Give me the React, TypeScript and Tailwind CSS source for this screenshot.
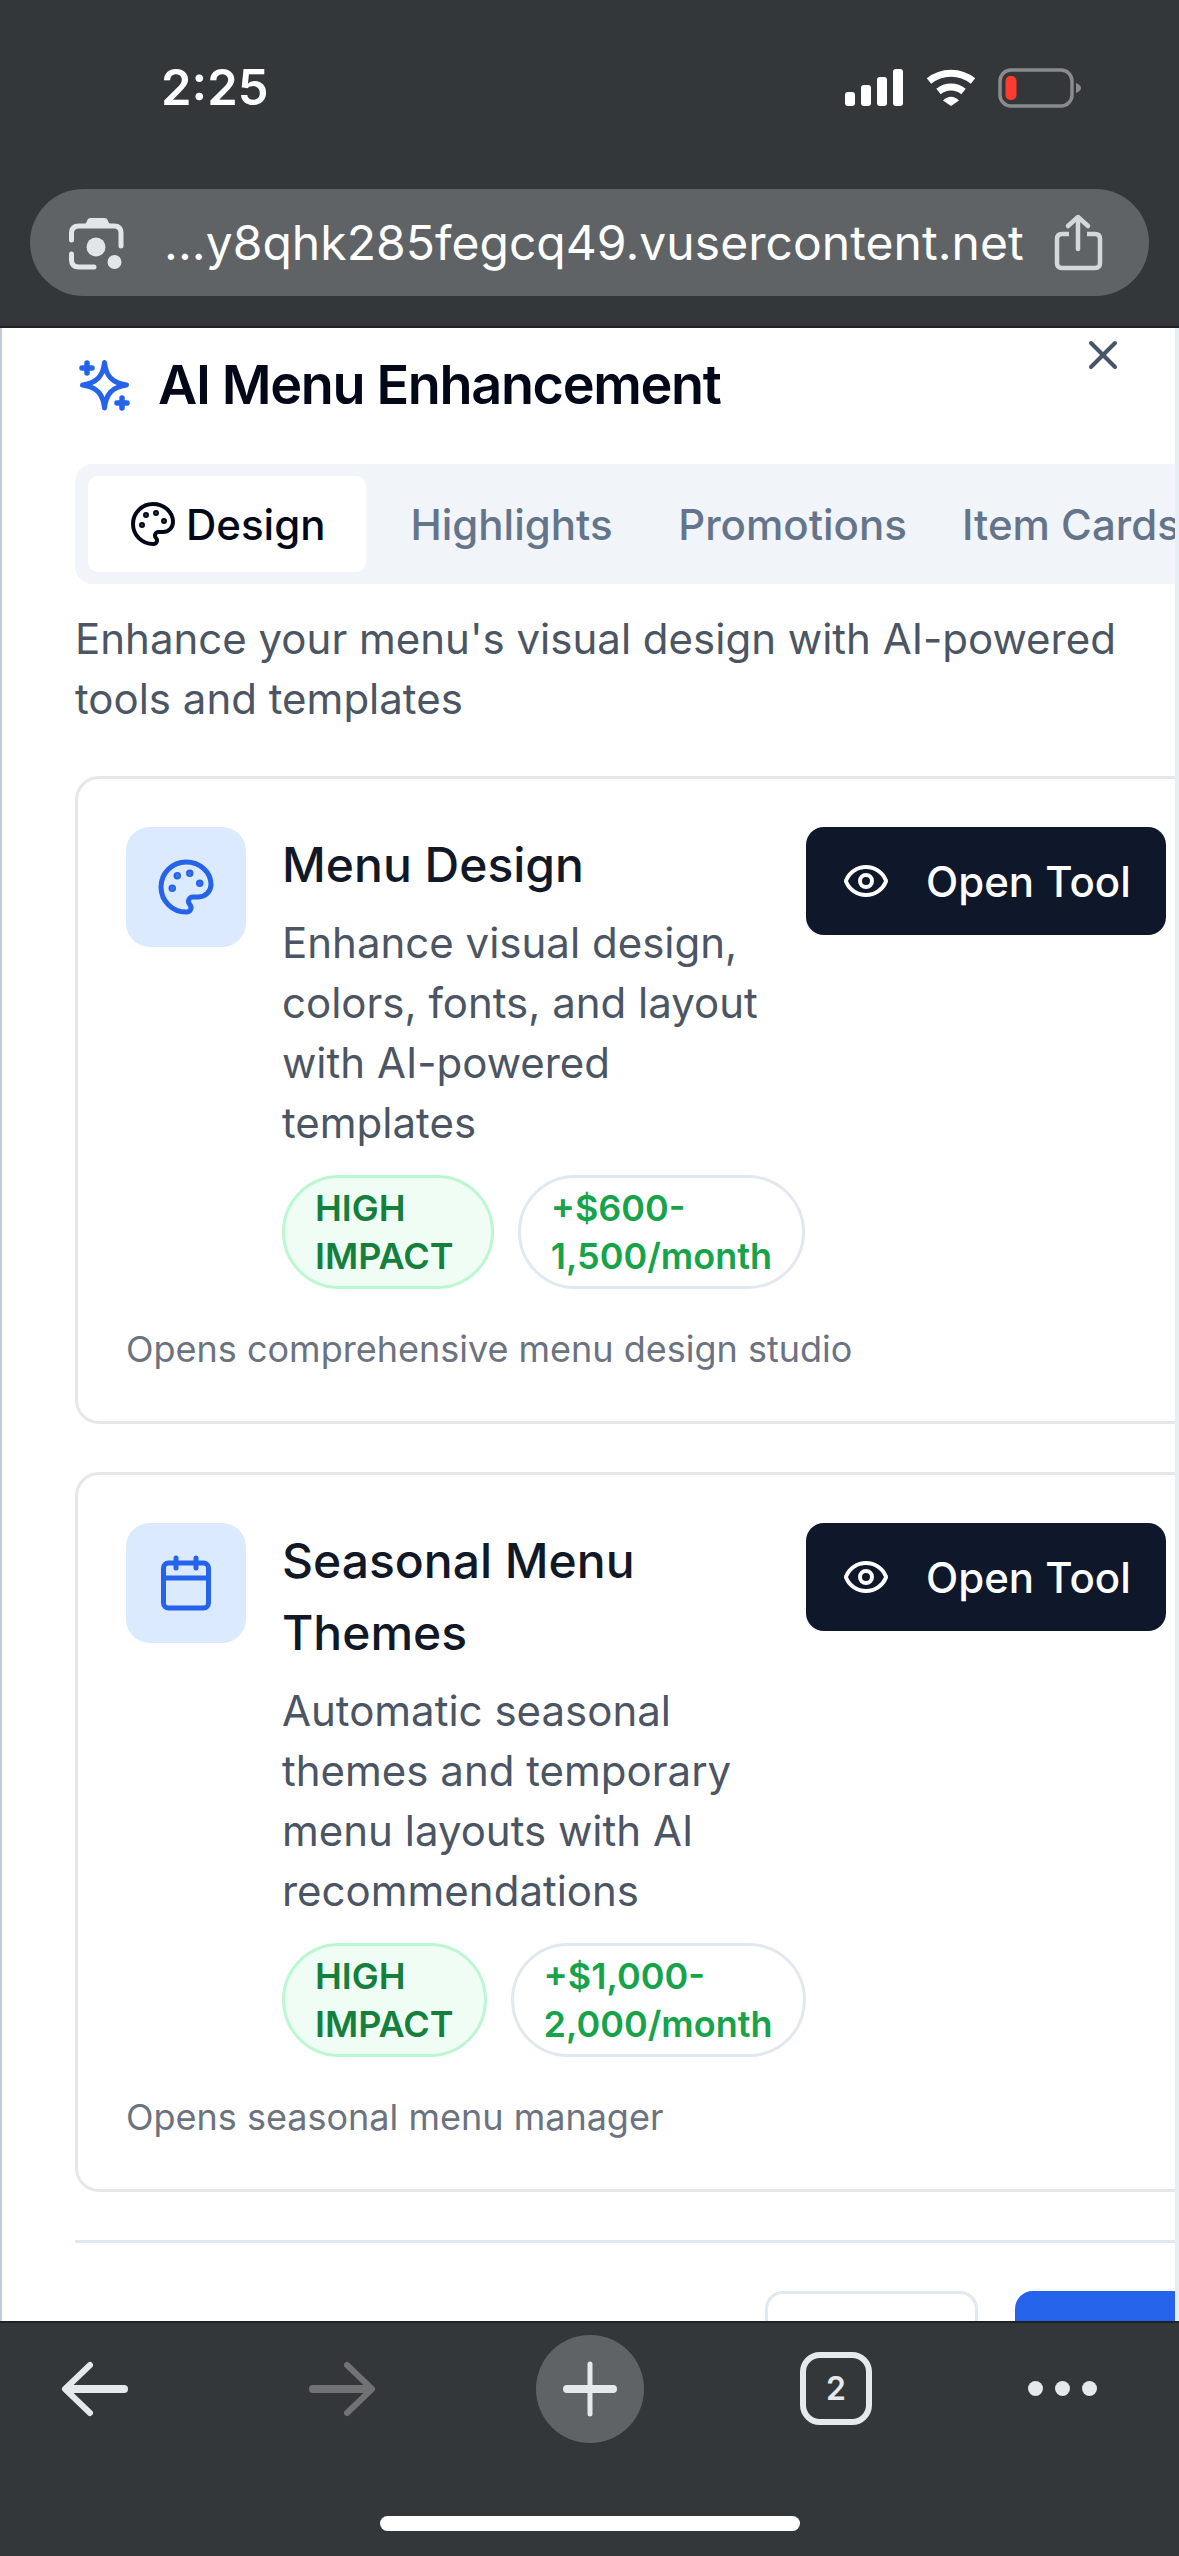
import React from 'react';
import { Calendar, Eye, Palette, X } from 'lucide-react';

type Tool = {
  title: string;
  desc: string;
  value: string;
  note: string;
  icon: React.ReactNode;
};

const tools: Tool[] = [
  {
    title: 'Menu Design',
    desc: 'Enhance visual design, colors, fonts, and layout with AI-powered templates',
    value: '+$600-1,500/month',
    note: 'Opens comprehensive menu design studio',
    icon: <Palette className="w-[60px] h-[60px] text-[#2563eb]" strokeWidth={2} />,
  },
  {
    title: 'Seasonal Menu Themes',
    desc: 'Automatic seasonal themes and temporary menu layouts with AI recommendations',
    value: '+$1,000-2,000/month',
    note: 'Opens seasonal menu manager',
    icon: <Calendar className="w-[60px] h-[60px] text-[#2563eb]" strokeWidth={2} />,
  },
];

const StatusIcons = () => (
  <div className="flex items-center">
    <svg width="58" height="38" viewBox="846 69 58 38" fill="#fff">
      <rect x="846" y="92" width="10" height="14" rx="3" />
      <rect x="862" y="85" width="10" height="21" rx="3" />
      <rect x="878" y="77" width="10" height="29" rx="3" />
      <rect x="894" y="69" width="10" height="37" rx="3" />
    </svg>
    <svg className="ml-[22px]" width="52" height="38" viewBox="926 69 52 38" fill="none">
      <path d="M930 81A35 35 0 0 1 974 81" stroke="#fff" strokeWidth="7" />
      <path d="M939.5 91.5A20 20 0 0 1 964.5 91.5" stroke="#fff" strokeWidth="7" />
      <path d="M944 100.5Q952 93 960 100.5L952 106Z" fill="#fff" />
    </svg>
    <svg className="ml-[21px]" width="84" height="40" viewBox="998 67 84 40" fill="none">
      <rect x="1000" y="69" width="72" height="36" rx="11" stroke="#8a8b8d" strokeWidth="3.5" />
      <rect x="1005.500" y="75" width="11" height="24" rx="5" fill="#ff3b30" />
      <path d="M1076 82Q1081 84 1081 87Q1081 90 1076 92Z" fill="#8a8b8d" />
    </svg>
  </div>
);

const LensIcon = () => (
  <svg width="60" height="60" viewBox="65 212 60 60" fill="none" className="shrink-0">
    <path d="M83 226L87 218Q88 217 90 217H103Q105 217 106 218L110 226Z" fill="#e3e6e8" />
    <path d="M70.500 239V232Q70.500 225 78 225H113Q120 225 120 232V245" stroke="#e3e6e8" strokeWidth="5" strokeLinecap="round" />
    <path d="M70.500 253V259Q70.500 266 78 266H93" stroke="#e3e6e8" strokeWidth="5" strokeLinecap="round" />
    <circle cx="95" cy="246" r="9.500" fill="#e3e6e8" />
    <circle cx="113.500" cy="261" r="7" fill="#e3e6e8" />
  </svg>
);

const ShareIcon = () => (
  <svg width="52" height="60" viewBox="1053 214 52 60" fill="none" className="shrink-0">
    <path d="M1070 235H1063Q1058 235 1058 240V264Q1058 269 1063 269H1096Q1101 269 1101 264V240Q1101 235 1096 235H1088" stroke="#d5d8db" strokeWidth="4.500" />
    <path d="M1079 219V250" stroke="#d5d8db" strokeWidth="4.500" strokeLinecap="round" />
    <path d="M1069 227L1079 218L1089 227" stroke="#d5d8db" strokeWidth="4.500" strokeLinecap="round" strokeLinejoin="round" />
  </svg>
);

const SparkIcon = () => (
  <svg width="54" height="54" viewBox="78 358 54 54" fill="none" stroke="#2563eb" strokeLinecap="round" strokeLinejoin="round" className="shrink-0 ml-[3px]">
    <path d="M104.500 362.500C106 376 112 383 126.500 385C112 387 106 394 104.500 408C103 394 97 387 82.500 385C97 383 103 376 104.500 362.500Z" strokeWidth="5" />
    <path d="M87 363V373M82 368H92" strokeWidth="5.500" />
    <path d="M122 398V408M117 403H127" strokeWidth="5.500" />
  </svg>
);

const ToolCard = ({ tool }: { tool: Tool }) => (
  <div className="rounded-[24px] border-[3px] border-[#e5e7eb] p-[48px] bg-white">
    <div className="flex items-start">
      <div className="w-[120px] h-[120px] shrink-0 rounded-[24px] bg-[#dbeafe] flex items-center justify-center">
        {tool.icon}
      </div>
      <div className="w-[523px] ml-[36px] pt-[2px] shrink-0">
        <h3 className="text-[48px] leading-[72px] font-medium text-[#111827]">{tool.title}</h3>
        <p className="mt-[12px] text-[42px] leading-[60px] text-[#4b5563]">{tool.desc}</p>
        <div className="mt-[22px] flex gap-[24px]">
          <span className="rounded-[57px] border-[3px] border-[#bbf7d0] bg-[#f0fdf4] px-[30px] py-[6px] text-[36px] leading-[48px] font-semibold text-[#15803d]">
            HIGH IMPACT
          </span>
          <span className="rounded-[57px] border-[3px] border-[#e2e8f0] bg-white px-[30px] py-[6px] text-[36px] leading-[48px] font-semibold text-[#16a34a]">
            {tool.value}
          </span>
        </div>
      </div>
      <button className="ml-auto h-[108px] w-[360px] shrink-0 rounded-[18px] bg-[#0f172a] flex items-center pl-[36px] gap-[36px] text-[42px] font-medium text-white">
        <Eye className="w-[48px] h-[48px]" strokeWidth={2} />
        Open Tool
      </button>
    </div>
    <p className="mt-[36px] text-[36px] leading-[48px] text-[#6b7280]">{tool.note}</p>
  </div>
);

const App: React.FC = () => {
  return (
    <div className="w-[1179px] h-[2556px] overflow-hidden flex flex-col bg-[#34373a] font-[Inter,sans-serif]">
      {/* Status bar and address bar */}
      <div className="h-[328px] shrink-0 border-b-2 border-[#1f2123] flex flex-col">
        <div className="h-[189px] shrink-0 flex items-start justify-between pl-[161px] pr-[97px] pt-[68px]">
          <span className="text-[49px] leading-[40px] font-semibold text-white">2:25</span>
          <StatusIcons />
        </div>
        <div className="mx-[30px] h-[107px] rounded-full bg-[#5f6366] flex items-center pl-[36px] pr-[45px]">
          <LensIcon />
          <span className="ml-[38px] flex-1 text-[48px] tracking-[0.05px] leading-none text-white whitespace-nowrap">
            ...y8qhk285fegcq49.vusercontent.net
          </span>
          <ShareIcon />
        </div>
      </div>

      {/* Dialog, cut off by the browser chrome */}
      <div className="relative flex-1 min-h-0 overflow-hidden bg-white border-l-[2px] border-l-[#c0cad8] border-r-[4px] border-r-[#e8eef6]">
        <X className="absolute right-[48px] top-[3px] w-[48px] h-[48px] text-[#475569]" strokeWidth={2} />
        <div className="ml-[73px] w-[1142px] pt-[15px]">
          <div className="flex items-center h-[84px]">
            <SparkIcon />
            <h2 className="ml-[26px] text-[54px] leading-[84px] font-semibold tracking-[-1.35px] text-[#020817]">AI Menu Enhancement</h2>
          </div>

          <div className="mt-[37px] h-[120px] rounded-[18px] bg-[#f1f5f9] flex items-center pl-[13px] text-[42px] font-medium text-[#64748b]">
            <div className="w-[278px] h-[96px] shrink-0 rounded-[10px] bg-white flex items-center pl-[41px] gap-[9px] text-[#020817]">
              <Palette className="w-[48px] h-[48px]" strokeWidth={2} />
              Design
            </div>
            <div className="w-[287px] shrink-0 text-center pl-[4px]">Highlights</div>
            <div className="w-[279px] shrink-0 text-center">Promotions</div>
            <div className="shrink-0 ml-[30px] whitespace-nowrap">Item Cards</div>
          </div>

          <p className="mt-[25px] w-[1060px] text-[42px] leading-[60px] text-[#4b5563]">
            Enhance your menu's visual design with AI-powered tools and templates
          </p>

          <div className="mt-[47px] flex flex-col gap-[48px]">
            {tools.map((tool) => (
              <ToolCard key={tool.title} tool={tool} />
            ))}
          </div>

          <div className="mt-[48px] border-t-[3px] border-[#e2e8f0] pt-[48px] flex justify-end gap-[37px]">
            <div className="w-[213px] h-[108px] rounded-[18px] border-[3px] border-[#e2e8f0] bg-white" />
            <div className="w-[202px] h-[108px] rounded-[18px] bg-[#2563eb]" />
          </div>
        </div>
      </div>

      {/* Browser toolbar */}
      <div className="h-[235px] shrink-0 border-t-2 border-[#1f2123] flex flex-col">
        <div className="h-[131px] shrink-0 flex items-center">
          <svg className="ml-[59px] shrink-0" width="72" height="60" viewBox="59 2358 72 60" fill="none" stroke="#e6e9ec" strokeLinecap="round" strokeLinejoin="round">
            <path d="M70 2388H124" strokeWidth="8" />
            <path d="M90 2364L65 2388L90 2412" strokeWidth="6" />
          </svg>
          <svg className="ml-[176px] shrink-0" width="72" height="60" viewBox="307 2358 72 60" fill="none" stroke="#707274" strokeLinecap="round" strokeLinejoin="round">
            <path d="M313 2388H367" strokeWidth="8" />
            <path d="M347 2364L372 2388L347 2412" strokeWidth="6" />
          </svg>
          <div className="ml-[157px] w-[108px] h-[108px] shrink-0 rounded-full bg-[#5f6366] flex items-center justify-center">
            <svg width="60" height="60" viewBox="0 0 60 60" fill="none" stroke="#e6e9ec" strokeLinecap="round">
              <path d="M30 5V55" strokeWidth="5" />
              <path d="M7 30H53" strokeWidth="8" />
            </svg>
          </div>
          <div className="ml-[156px] w-[72px] h-[73px] shrink-0 rounded-[20px] border-[6px] border-[#e6e9ec] flex items-center justify-center text-[32px] font-semibold text-[#e6e9ec]">
            2
          </div>
          <div className="ml-[156px] flex gap-[12px] shrink-0">
            <span className="w-[15px] h-[15px] rounded-full bg-[#e6e9ec]" />
            <span className="w-[15px] h-[15px] rounded-full bg-[#e6e9ec]" />
            <span className="w-[15px] h-[15px] rounded-full bg-[#e6e9ec]" />
          </div>
        </div>
        <div className="mt-[62px] mx-auto w-[420px] h-[15px] rounded-full bg-white" />
      </div>
    </div>
  );
};

export default App;
